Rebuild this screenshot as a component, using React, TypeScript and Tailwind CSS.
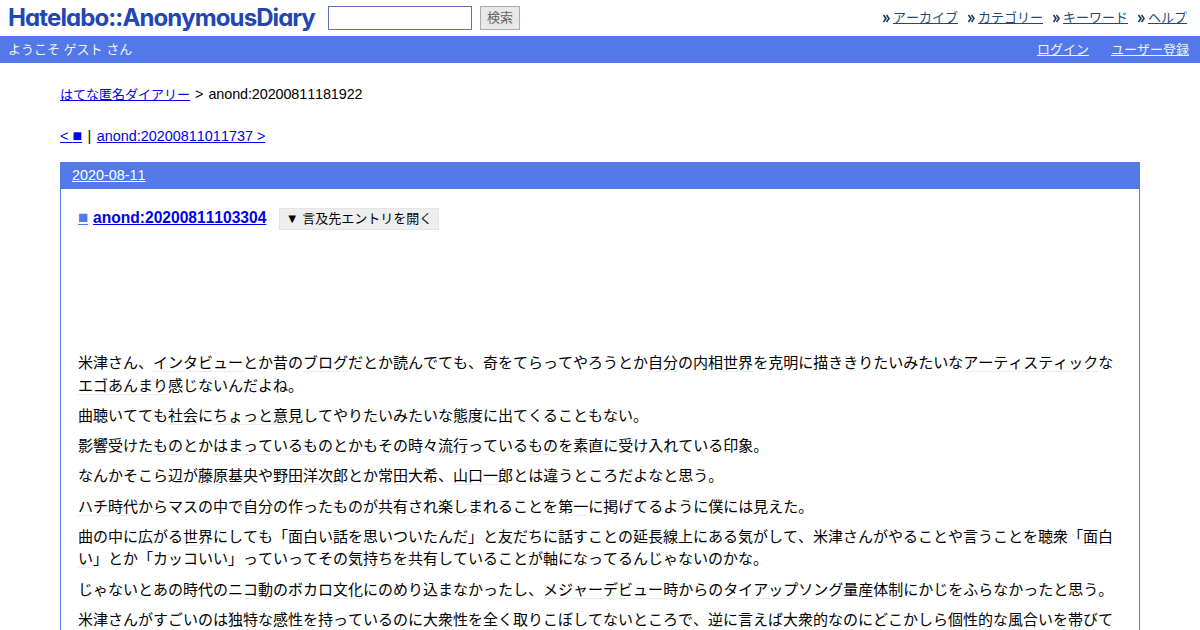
const K = ({ children }: { children: React.ReactNode }) => (
  <span className="border-b border-[#ececec]">{children}</span>
);

const Nav = ({ label }: { label: string }) => (
  <span className="flex items-center gap-[3px]">
    <svg width="7" height="9" viewBox="0 0 7 9" className="shrink-0">
      <path d="M0.5 1l2.5 3.5-2.5 3.5M3.5 1l2.5 3.5-2.5 3.5" fill="none" stroke="#1f3a5f" strokeWidth="1.6" />
    </svg>
    <a href="#" className="text-[#1c4a80] underline">{label}</a>
  </span>
);

export default function App() {
  return (
    <div className="h-[630px] w-[1200px] overflow-hidden bg-white font-['Liberation_Sans','Noto_Sans_CJK_JP',sans-serif] text-[15px] text-black [font-kerning:none] [text-spacing-trim:space-all]">
      <header className="flex h-9 items-center justify-between pl-2 pr-[13px]">
        <div className="flex items-center">
          <span className="w-[320px] font-['Inter',sans-serif] text-[24px] font-bold leading-[36px] tracking-[-0.92px] text-[#2246b4] [font-feature-settings:'cv11']">Hatelabo::AnonymousDiary</span>
          <input className="h-6 w-36 border border-[#5c73b8] bg-white" aria-label="検索語" />
          <button className="ml-2 h-6 w-10 border border-[#aaaaaa] bg-[#e8e8e8] text-[13px] text-[#666666]">検索</button>
        </div>
        <nav className="flex gap-[10px] text-[13px]">
          <Nav label="アーカイブ" />
          <Nav label="カテゴリー" />
          <Nav label="キーワード" />
          <Nav label="ヘルプ" />
        </nav>
      </header>
      <div className="flex h-[27px] items-center justify-between bg-[#5279e7] pl-2 pr-[11px] text-[13px] text-[#f2f2f2]">
        <span>ようこそ ゲスト さん</span>
        <span className="flex gap-[22px]">
          <a href="#" className="underline">ログイン</a>
          <a href="#" className="underline">ユーザー登録</a>
        </span>
      </div>
      <main className="px-[60px]">
        <p className="mt-[22px] h-[18px] text-[14.4px] leading-[18px]">
          <a href="#" className="text-[13px] text-[#0000ee] underline">はてな匿名ダイアリー</a>
          <span className="ml-px"> &gt; </span>
          <span className="ml-px tracking-[-0.1px]">anond:20200811181922</span>
        </p>
        <p className="mt-6 h-[18px] text-[14.4px] leading-[18px]">
          <a href="#" className="text-[#0000ee] underline">&lt; <span className="text-[16px]">■</span></a>
          <span className="mx-[1.5px]"> | </span>
          <a href="#" className="text-[#0000ee] underline">anond:20200811011737 &gt;</a>
        </p>
        <section className="mt-[17px] border border-t-0 border-[#5279e7]">
          <h2 className="-mx-px h-[27px] bg-[#5279e7] pl-3 text-[14.4px] font-normal leading-[26px] text-white">
            <a href="#" className="underline">2020-08-11</a>
          </h2>
          <div className="px-[17px]">
            <div className="mt-[19px] flex h-[22px] items-center">
              <a href="#" className="mb-[2px] w-[10px] text-[17px] font-bold leading-[20px] text-[#5279e7] underline">■</a>
              <a href="#" className="mb-[2px] ml-[5px] w-[174px] whitespace-nowrap text-[15.6px] font-bold text-[#0000ee] underline">anond:20200811103304</a>
              <button className="ml-3 h-[22px] w-40 border border-[#e4e4e4] bg-[#eeeeee] text-[13px]">▼ 言及先エントリを開く</button>
            </div>
            <div className="mt-[122px] leading-[22.5px] [&>p]:mb-[7.8px]">
              <p>米津さん、<K>インタビュー</K>とか昔の<K>ブログ</K>だとか読んでても、奇をてらってやろうとか<K>自分</K>の内相<K>世界</K>を克明に描ききりたいみたいな<K>アーティスティック</K>な<br /><K>エゴあんまり</K>感じないんだよね。</p>
              <p>曲聴いてても<K>社会</K>に<K>ちょっと意見</K>してやりたいみたいな態度に出てくることもない。</p>
              <p>影響受けた<K>もの</K>とか<K>はまっているもの</K>とかもその時々<K>流行</K>っている<K>もの</K>を素直に受け入れている印象。</p>
              <p>なんかそこら辺が<K>藤原基央</K>や<K>野田洋次郎</K>とか<K>常田</K>大希、<K>山口一郎</K>とは違うところだよなと思う。</p>
              <p><K>ハチ時代から</K>マスの中で<K>自分</K>の作った<K>もの</K>が共有され楽<K>しま</K>れることを<K>第一</K>に掲げてるように僕には見えた。</p>
              <p>曲の中に広がる<K>世界</K>にしても「面白い話を思いついたんだ」と友だちに話すことの延長線上にある気がして、米津さんがやることや言うことを聴衆「<K>面白<br />い</K>」とか「カッコいい」っていってその<K>気持ち</K>を共有していることが軸になってるんじゃないのかな。</p>
              <p>じゃないとあの<K>時代</K>のニ<K>コ動</K>のボカロ<K>文化</K>にのめり込まなかったし、<K>メジャーデビュー</K>時からの<K>タイアップソング</K>量産<K>体制</K>にかじをふらなかったと思う。</p>
              <p>米津さんがすごいのは独特な感性を持っているのに大衆性を全く取りこぼしてないところで、逆に言えば大衆的なのにどこかしら個性的な風合いを帯びて</p>
            </div>
          </div>
        </section>
      </main>
    </div>
  );
}
